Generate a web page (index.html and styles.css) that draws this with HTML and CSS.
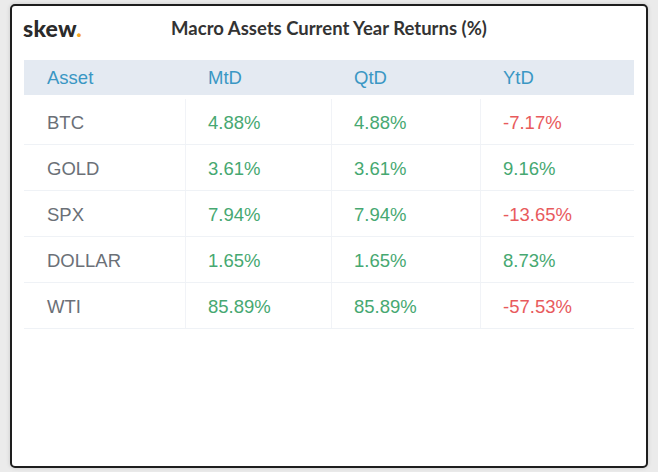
FILE: index.html
```html
<!DOCTYPE html>
<html>
<head>
<meta charset="utf-8">
<link rel="stylesheet" href="styles.css">
</head>
<body>
<div class="frame">
  <div class="top">
    <div class="logo">skew<span class="dot">.</span></div>
    <div class="title">Macro Assets Current Year Returns (%)</div>
  </div>
  <div class="table">
    <div class="head">
      <div class="hc">Asset</div>
      <div class="hc">MtD</div>
      <div class="hc">QtD</div>
      <div class="hc">YtD</div>
    </div>
    <div class="body">
      <div class="row"><div class="c name">BTC</div><div class="c pos">4.88%</div><div class="c pos">4.88%</div><div class="c neg">-7.17%</div></div>
      <div class="row"><div class="c name">GOLD</div><div class="c pos">3.61%</div><div class="c pos">3.61%</div><div class="c pos">9.16%</div></div>
      <div class="row"><div class="c name">SPX</div><div class="c pos">7.94%</div><div class="c pos">7.94%</div><div class="c neg">-13.65%</div></div>
      <div class="row"><div class="c name">DOLLAR</div><div class="c pos">1.65%</div><div class="c pos">1.65%</div><div class="c pos">8.73%</div></div>
      <div class="row"><div class="c name">WTI</div><div class="c pos">85.89%</div><div class="c pos">85.89%</div><div class="c neg">-57.53%</div></div>
    </div>
  </div>
</div>
</body>
</html>
```

FILE: styles.css
```css
html, body {
  margin: 0;
  padding: 0;
}
body {
  background: #ebebeb;
  width: 658px;
  height: 472px;
  overflow: hidden;
  padding-top: 4px;
  box-sizing: border-box;
}
.frame {
  margin-left: 10px;
  width: 638px;
  height: 464px;
  box-sizing: border-box;
  border: 2px solid #1e1e1e;
  border-radius: 5px;
  background: #ffffff;
  box-shadow: 0 0 4px rgba(0,0,0,0.15);
  padding: 0 12px;
}
.top {
  position: relative;
  height: 54px;
  display: flex;
  justify-content: center;
  align-items: flex-start;
  padding-top: 11px;
  box-sizing: border-box;
}
.logo {
  position: absolute;
  left: -1px;
  top: 8px;
  font-family: "Lato", sans-serif;
  font-weight: 900;
  font-size: 23px;
  color: #2b2b2b;
  letter-spacing: 0.2px;
}
.dot {
  color: #f5a623;
}
.title {
  font-family: "Lato", sans-serif;
  font-weight: 700;
  font-size: 18.5px;
  color: #333333;
}
.table {
  font-family: "Liberation Sans", Arial, sans-serif;
  font-size: 18.5px;
}
.head, .row {
  display: grid;
  grid-template-columns: 161px 146px 149px 154px;
}
.head {
  background: #e4eaf2;
  height: 35px;
  align-items: center;
}
.hc {
  padding-left: 23px;
  padding-top: 1px;
  color: #3a97c4;
}
.body {
  margin-top: 4px;
}
.row {
  height: 46px;
  box-sizing: border-box;
  border-bottom: 1px solid #eff2f6;
}
.c {
  display: flex;
  align-items: center;
  padding-left: 22px;
  padding-top: 3px;
  border-left: 1px solid #f1f3f7;
}
.c.name {
  border-left: none;
  padding-left: 23px;
  color: #6b7077;
}
.pos {
  color: #46a871;
}
.neg {
  color: #e85a5c;
}
```
